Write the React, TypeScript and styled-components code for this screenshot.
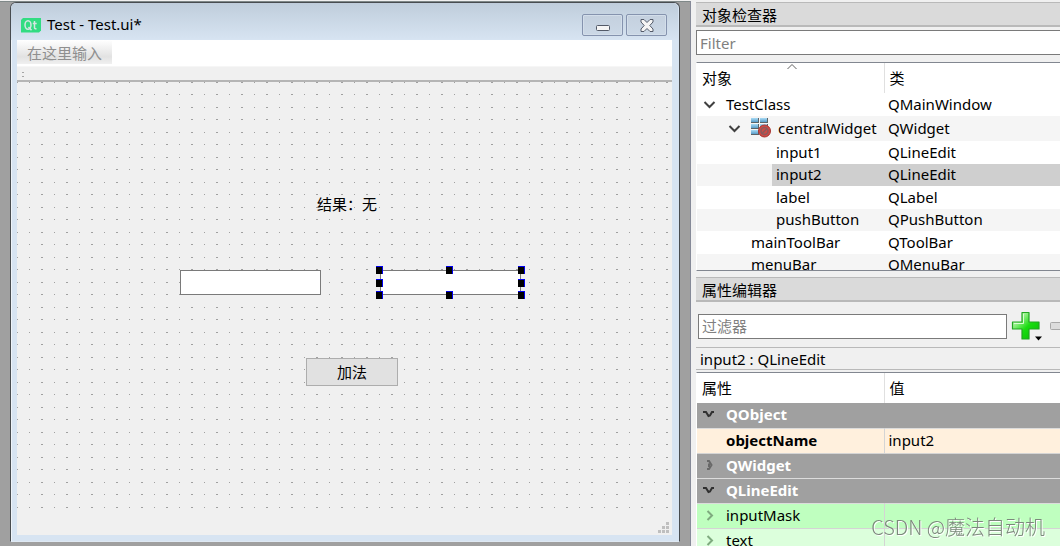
import React from "react";
import styled, { createGlobalStyle, css } from "styled-components";

const GlobalStyle = createGlobalStyle`
  *, *::before, *::after { box-sizing: border-box; }
  body { margin: 0; background: #f0f0f0; }
  body, input, button, table {
    font-family: "Noto Sans", "Noto Sans CJK SC", sans-serif;
    font-size: 15px;
    line-height: 22px;
    color: #000;
  }
  h1, h2, p { margin: 0; font-size: 15px; font-weight: 400; }
`;

const Shell = styled.div`
  height: 100vh;
  overflow: hidden;
  padding-top: 1px;
  display: grid;
  grid-template-columns: minmax(560px, 690fr) minmax(300px, 370fr);
`;

/* ---------- form window ---------- */

const Workspace = styled.main`
  min-width: 0;
  border-top: 1px solid #7f8888;
  background: #a0a0a0;
  padding: 0 10px 4px;
  display: flex;
`;

const FormWindow = styled.section`
  flex: 1;
  min-width: 0;
  display: flex;
  flex-direction: column;
  border: 1px solid #484c50;
  border-bottom-color: #dfe9f3;
  border-radius: 6px 6px 0 0;
  background: #d7e4f2;
  box-shadow: inset 1px 1px 0 #eef4fa;
  padding: 0 7px 6px 6px;
`;

const TitleBar = styled.header`
  height: 37px;
  margin: 0 -6px;
  padding: 7px 11px 0 10px;
  display: flex;
  align-items: center;
  gap: 5px;
  border-radius: 5px 5px 0 0;
  background: linear-gradient(#bfcddb, #d7e4f2);
`;

const FormTitle = styled.h1`
  flex: 1;
  padding-bottom: 2px;
`;

const CaptionButtons = styled.div`
  display: flex;
  gap: 3px;
`;

const CaptionButton = styled.button`
  width: 41px;
  height: 22px;
  padding: 0;
  display: grid;
  place-items: center;
  border: 1px solid #8593ae;
  border-radius: 2px;
  background: linear-gradient(#c4d0de, #cbd8e6);
  box-shadow: inset 0 0 0 1px #d3deea;
`;

const FormMenu = styled.nav`
  height: 26px;
  background: #fff;
  display: flex;
`;

const MenuPlaceholder = styled.button`
  width: 95px;
  height: 24px;
  padding: 2px 0 0;
  border: 0;
  color: #8f8f8f;
  background: linear-gradient(#fff, #e2e2e2 70%, #f0f0f0);
`;

const FormToolBar = styled.div`
  height: 16px;
  border-top: 1px solid #f6f6f6;
  border-bottom: 2px solid #b5b5b5;
  background: #f0f0f0;
  padding: 5px;
  display: flex;
`;

const Client = styled.div`
  flex: 1;
  min-height: 0;
  display: flex;
  flex-direction: column;
  background: #f0f0f0;
`;

const Canvas = styled.div`
  flex: 1;
  position: relative;
  background:
    linear-gradient(90deg, transparent 0 1px, #f0f0f0 1px 12px, transparent 12px 13px, #f0f0f0 13px 24px, transparent 24px) 0 0 / 25px 25px,
    linear-gradient(#a0a0a0 0 1px, #f0f0f0 1px 12px, #a0a0a0 12px 13px, #f0f0f0 13px) 0 0 / 25px 25px;
`;

const FormStatus = styled.footer`
  height: 20px;
  padding: 0 3px 2px;
  display: flex;
  justify-content: flex-end;
  align-items: flex-end;
`;

const Placed = styled.div<{ $x: number; $y: number }>`
  position: absolute;
  left: ${(p) => p.$x}px;
  top: ${(p) => p.$y}px;
  display: flex;
`;

const LineEdit = styled.input`
  width: 141px;
  height: 25px;
  padding: 0 4px;
  border: 1px solid #7a7a7a;
  border-radius: 0;
  background: #fff;
  outline: 0;
`;

const PushButton = styled.button`
  width: 92px;
  height: 28px;
  padding: 0;
  border: 1px solid #adadad;
  background: #e1e1e1;
`;

const Handle = styled.span<{ $x: number; $y: number }>`
  position: absolute;
  left: ${(p) => p.$x}px;
  top: ${(p) => p.$y}px;
  width: 7px;
  height: 8px;
  background: #000;
  border-top: 1px solid #0000f0;
  border-right: 1px solid #0000f0;
`;

/* ---------- docks ---------- */

const Docks = styled.aside`
  min-width: 0;
  border-left: 1px solid #868a98;
  padding: 1px 0 0 5px;
  display: flex;
  flex-direction: column;
  overflow: hidden;
`;

const DockTitle = styled.h2<{ $spaced?: boolean }>`
  flex: none;
  height: 25px;
  margin-top: ${(p) => (p.$spaced ? 6 : 0)}px;
  padding: 0 6px;
  line-height: 24px;
  border-top: 1px solid #b9b9b9;
  border-bottom: 2px solid #b9b9b9;
  background: #dadada;
`;

const FilterInput = styled.input<{ $open?: boolean }>`
  flex: ${(p) => (p.$open ? "none" : "1")};
  min-width: 0;
  height: 25px;
  padding: 0 3px;
  border: 1px solid #7a7a7a;
  ${(p) => p.$open && css`border-right: 0; margin: 3px 0 7px;`}
  border-radius: 0;
  background: #fff;
  outline: 0;
  &::placeholder { color: #808080; opacity: 1; }
`;

const TableFrame = styled.div<{ $fill?: boolean }>`
  height: ${(p) => (p.$fill ? "auto" : "209px")};
  flex: ${(p) => (p.$fill ? "1" : "none")};
  min-height: 0;
  overflow: hidden;
  background: #fff;
  border-top: 1px solid #828790;
  border-bottom: ${(p) => (p.$fill ? "0" : "1px solid #828790")};
  border-left: 1px solid #fff;
`;

const Grid = styled.table`
  width: 100%;
  table-layout: fixed;
  border-collapse: collapse;
  td, th { padding: 0; text-align: left; font-weight: 400; white-space: nowrap; }
`;

const NameCol = styled.col`
  width: 187px;
`;

const HeadCell = styled.th`
  height: 30px;
  & > div { position: relative; padding-left: 5px; line-height: 30px; }
  & + & { border-left: 1px solid #e0e0e0; }
`;

const SortMark = styled.svg`
  position: absolute;
  left: 90px;
  top: 0;
`;

const TreeRow = styled.tr<{ $tall?: boolean }>`
  height: ${(p) => (p.$tall ? 25 : 23)}px;
  &:nth-child(even) {
    height: ${(p) => (p.$tall ? 25 : 22)}px;
    background: #f5f5f5;
  }
`;

const TreeCell = styled.td<{ $depth: number; $selected?: boolean }>`
  & > div {
    height: 22px;
    margin-left: ${(p) => p.$depth * 25}px;
    padding: 0 0 2px 4px;
    display: flex;
    align-items: center;
    background: ${(p) => (p.$selected ? "#cfcfcf" : "transparent")};
  }
`;

const Twisty = styled.span`
  width: 25px;
  display: flex;
  flex: none;
  padding-left: 2px;
`;

const IconSlot = styled.span`
  display: flex;
  flex: none;
  width: 27px;
`;

const ClassCell = styled.td<{ $selected?: boolean }>`
  & > div {
    height: 22px;
    padding-left: 4px;
    line-height: 20px;
    background: ${(p) => (p.$selected ? "#cfcfcf" : "transparent")};
  }
`;

const FilterBar = styled.div`
  flex: none;
  height: 45px;
  padding: 3px 0 0 2px;
  display: flex;
  align-items: center;
`;

const ToolButton = styled.button`
  flex: none;
  padding: 0;
  border: 0;
  background: transparent;
  display: flex;
`;

const Tools = styled.div`
  width: 53px;
  padding-left: 4px;
  display: flex;
  align-items: center;
  gap: 8px;
  overflow: hidden;
`;

const ObjectLabel = styled.p`
  flex: none;
  height: 23px;
  margin-bottom: 2px;
  padding-left: 4px;
  line-height: 22px;
  border-top: 1px solid #b9b9b9;
  border-bottom: 1px solid #b9b9b9;
`;

const rowColors = { base: "#fff0dd", mask: "#bfffbf", text: "#dcffdc", group: "#a0a0a0" };
type Tone = keyof typeof rowColors;

const PropRow = styled.tr<{ $tone: Tone }>`
  height: 25px;
  background: ${(p) => rowColors[p.$tone]};
  border-bottom: 1px solid ${(p) => (p.$tone === "group" ? "#dcdcdc" : "#d4d4d4")};
  td + td { border-left: 1px solid #d4d4d4; }
`;

const PropName = styled.td<{ $strong?: boolean; $light?: boolean }>`
  & > div {
    display: flex;
    align-items: center;
    padding: 0 0 2px 4px;
    font-weight: ${(p) => (p.$strong ? 700 : 400)};
    color: ${(p) => (p.$light ? "#fff" : "#000")};
  }
`;

const PropValue = styled.td`
  & > div { padding: 0 0 2px 4px; }
`;

const Watermark = styled.div`
  position: fixed;
  right: 15px;
  bottom: 4px;
  font-family: "Noto Sans CJK SC", sans-serif;
  font-size: 20px;
  font-weight: 300;
  line-height: 30px;
  color: #7c887c;
  text-shadow: 1px 1px 0 #fff;
  white-space: nowrap;
  pointer-events: none;
`;

/* ---------- drawings ---------- */

const Chevron = ({ open, color = "#404040" }: { open?: boolean; color?: string }) => (
  <svg width="13" height="12" viewBox="0 0 13 12" fill="none" stroke={color} strokeWidth="2">
    <path d={open ? "M1.500 4 6.500 9 11.500 4" : "M4.500 2 9 6.500 4.500 11"} />
  </svg>
);

const GroupMark = ({ open }: { open?: boolean }) => (
  <svg width="13" height="12" viewBox="0 0 13 12" fill="none" stroke={open ? "#303030" : "#686868"} strokeWidth="2">
    <path d={open ? "M0 4H3L5.500 8 7 7.500 9 4H11" : "M4 2H6L8.500 6 6 10H4M6 4.500V8"} />
  </svg>
);

const QtLogo = () => (
  <svg width="21" height="15" viewBox="0 0 21 15">
    <path d="M2 0H20V12.500L18 14.500H0V2Z" fill="#32dc82" />
    <g fill="none" stroke="#d5e6e2" strokeWidth="1.500">
      <ellipse cx="7" cy="7" rx="3" ry="4.200" />
      <path d="M7.500 9 10.500 12.300M13.500 3V9.500Q13.500 11 15.500 10.800M11.800 5.500H15.700" />
    </g>
  </svg>
);

const MinimizeMark = () => (
  <svg width="14" height="14" viewBox="0 0 14 14">
    <rect x="0.500" y="7.500" width="13" height="5" rx="1" fill="#f5f5f5" stroke="#535a68" />
  </svg>
);

const CloseMark = () => (
  <svg width="14" height="13" viewBox="0 0 14 13">
    <path d="M1 .5H4L7 3.500 10 .5H13V3L9.800 6.500 13 10V12.500H10L7 9.500 4 12.500H1V10L4.200 6.500 1 3Z" fill="#f5f5f5" stroke="#535a68" strokeLinejoin="round" />
  </svg>
);

const WidgetIcon = () => (
  <svg width="21" height="21" viewBox="0 0 21 21">
    <defs>
      <linearGradient id="cell" x1="0" y1="0" x2="0" y2="1">
        <stop offset="0" stopColor="#a9dbf5" />
        <stop offset="1" stopColor="#5a9cc8" />
      </linearGradient>
    </defs>
    <g fill="#5b6468">
      <rect y="1" width="8" height="5" />
      <rect x="9" y="1" width="8" height="5" />
      <rect y="7" width="8" height="5" />
      <rect x="9" y="7" width="8" height="5" />
      <rect y="13" width="8" height="5" />
    </g>
    <g fill="url(#cell)">
      <rect y="1" width="7" height="4" />
      <rect x="9" y="1" width="7" height="4" />
      <rect y="7" width="7" height="4" />
      <rect x="9" y="7" width="7" height="4" />
      <rect y="13" width="7" height="4" />
    </g>
    <circle cx="13.500" cy="14" r="6" fill="#cf4a45" stroke="#a83632" />
    <circle cx="13.500" cy="14" r="3.500" fill="none" stroke="#8a5a5c" strokeWidth="1.500" />
    <path d="M11 16.500 16 11.500" stroke="#8a5a5c" strokeWidth="1.500" />
  </svg>
);

const PlusIcon = () => (
  <svg width="31" height="30" viewBox="0 0 31 30">
    <defs>
      <linearGradient id="plus" x1="0" y1="0" x2="1" y2="1">
        <stop offset=".2" stopColor="#b5f5a8" />
        <stop offset=".55" stopColor="#19dc10" />
        <stop offset="1" stopColor="#05b905" />
      </linearGradient>
    </defs>
    <path d="M11 1.500H18V11H28V18H18V28H11V18H1.500V11H11Z" fill="url(#plus)" stroke="#22a522" strokeWidth="1.200" strokeLinejoin="round" />
    <path d="M12.500 3V12.500H3" fill="none" stroke="#d8ffd2" />
    <path d="M24 25.500H31L27.500 29.500Z" fill="#000" />
  </svg>
);

const MinusIcon = () => (
  <svg width="28" height="30" viewBox="0 0 28 30">
    <rect x=".5" y="11.500" width="26" height="7" rx="1" fill="#dcdcdc" stroke="#a8a8a8" />
  </svg>
);

const SizeGrip = () => (
  <svg width="11" height="11" viewBox="0 0 11 11" fill="#bfbfbf">
    <path d="M8 0h3v3h-3zM4 4h3v3h-3zM8 4h3v3h-3zM0 8h3v3h-3zM4 8h3v3h-3zM8 8h3v3h-3z" />
  </svg>
);

const ToolGrip = () => (
  <svg width="3" height="7" viewBox="0 0 3 7">
    <path d="M0 0h2v1h-2zM0 4h2v1h-2z" fill="#a5a5a5" />
  </svg>
);

/* ---------- data ---------- */

type TreeNode = { name: string; cls: string; depth: number; open?: boolean; icon?: boolean; selected?: boolean };

const nodes: TreeNode[] = [
  { name: "TestClass", cls: "QMainWindow", depth: 0, open: true },
  { name: "centralWidget", cls: "QWidget", depth: 1, open: true, icon: true },
  { name: "input1", cls: "QLineEdit", depth: 3 },
  { name: "input2", cls: "QLineEdit", depth: 3, selected: true },
  { name: "label", cls: "QLabel", depth: 3 },
  { name: "pushButton", cls: "QPushButton", depth: 3 },
  { name: "mainToolBar", cls: "QToolBar", depth: 2 },
  { name: "menuBar", cls: "QMenuBar", depth: 2 },
];

type Prop = { name: string; value?: string; tone: Tone; open?: boolean; leaf?: boolean; strong?: boolean };

const properties: Prop[] = [
  { name: "QObject", tone: "group", open: true },
  { name: "objectName", value: "input2", tone: "base", leaf: true, strong: true },
  { name: "QWidget", tone: "group" },
  { name: "QLineEdit", tone: "group", open: true },
  { name: "inputMask", value: "", tone: "mask" },
  { name: "text", value: "", tone: "text" },
];

const handles = [
  [-4, -4], [66, -4], [138, -4],
  [-4, 9], [138, 9],
  [-4, 21], [66, 21], [138, 21],
];

export default function App() {
  return (
    <>
      <GlobalStyle />
      <Shell>
        <Workspace>
          <FormWindow>
            <TitleBar>
              <QtLogo />
              <FormTitle>Test - Test.ui*</FormTitle>
              <CaptionButtons>
                <CaptionButton aria-label="Minimize"><MinimizeMark /></CaptionButton>
                <CaptionButton aria-label="Close"><CloseMark /></CaptionButton>
              </CaptionButtons>
            </TitleBar>
            <FormMenu>
              <MenuPlaceholder>在这里输入</MenuPlaceholder>
            </FormMenu>
            <FormToolBar><ToolGrip /></FormToolBar>
            <Client>
              <Canvas>
                <Placed $x={300} $y={111}><p>结果：无</p></Placed>
                <Placed $x={163} $y={188}><LineEdit aria-label="input1" /></Placed>
                <Placed $x={363} $y={188}>
                  <LineEdit aria-label="input2" />
                  {handles.map(([x, y]) => <Handle key={`${x},${y}`} $x={x} $y={y} />)}
                </Placed>
                <Placed $x={289} $y={276}><PushButton>加法</PushButton></Placed>
              </Canvas>
              <FormStatus><SizeGrip /></FormStatus>
            </Client>
          </FormWindow>
        </Workspace>

        <Docks>
          <DockTitle>对象检查器</DockTitle>
          <FilterInput $open placeholder="Filter" aria-label="Filter" />
          <TableFrame>
            <Grid>
              <colgroup><NameCol /><col /></colgroup>
              <thead>
                <tr>
                  <HeadCell>
                    <div>
                      对象
                      <SortMark width="10" height="7" viewBox="0 0 10 7" fill="none" stroke="#606060">
                        <path d="M.5 6 5 1.500 9.500 6" />
                      </SortMark>
                    </div>
                  </HeadCell>
                  <HeadCell><div>类</div></HeadCell>
                </tr>
              </thead>
              <tbody>
                {nodes.map((n) => (
                  <TreeRow key={n.name} $tall={n.icon}>
                    <TreeCell $depth={n.depth} $selected={n.selected}>
                      <div>
                        {n.open && <Twisty><Chevron open /></Twisty>}
                        {n.icon && <IconSlot><WidgetIcon /></IconSlot>}
                        {n.name}
                      </div>
                    </TreeCell>
                    <ClassCell $selected={n.selected}><div>{n.cls}</div></ClassCell>
                  </TreeRow>
                ))}
              </tbody>
            </Grid>
          </TableFrame>

          <DockTitle $spaced>属性编辑器</DockTitle>
          <FilterBar>
            <FilterInput placeholder="过滤器" aria-label="过滤器" />
            <Tools>
              <ToolButton aria-label="Add property"><PlusIcon /></ToolButton>
              <ToolButton aria-label="Remove property"><MinusIcon /></ToolButton>
            </Tools>
          </FilterBar>
          <ObjectLabel>input2 : QLineEdit</ObjectLabel>
          <TableFrame $fill>
            <Grid>
              <colgroup><NameCol /><col /></colgroup>
              <thead>
                <tr>
                  <HeadCell><div>属性</div></HeadCell>
                  <HeadCell><div>值</div></HeadCell>
                </tr>
              </thead>
              <tbody>
                {properties.map((p) => {
                  const group = p.tone === "group";
                  return (
                    <PropRow key={p.name} $tone={p.tone}>
                      <PropName colSpan={group ? 2 : 1} $strong={group || p.strong} $light={group}>
                        <div>
                          <Twisty>
                            {group ? <GroupMark open={p.open} /> : p.leaf ? null : <Chevron color="#7faa7f" />}
                          </Twisty>
                          {p.name}
                        </div>
                      </PropName>
                      {!group && <PropValue><div>{p.value}</div></PropValue>}
                    </PropRow>
                  );
                })}
              </tbody>
            </Grid>
          </TableFrame>
        </Docks>
      </Shell>
      <Watermark>CSDN @魔法自动机</Watermark>
    </>
  );
}
